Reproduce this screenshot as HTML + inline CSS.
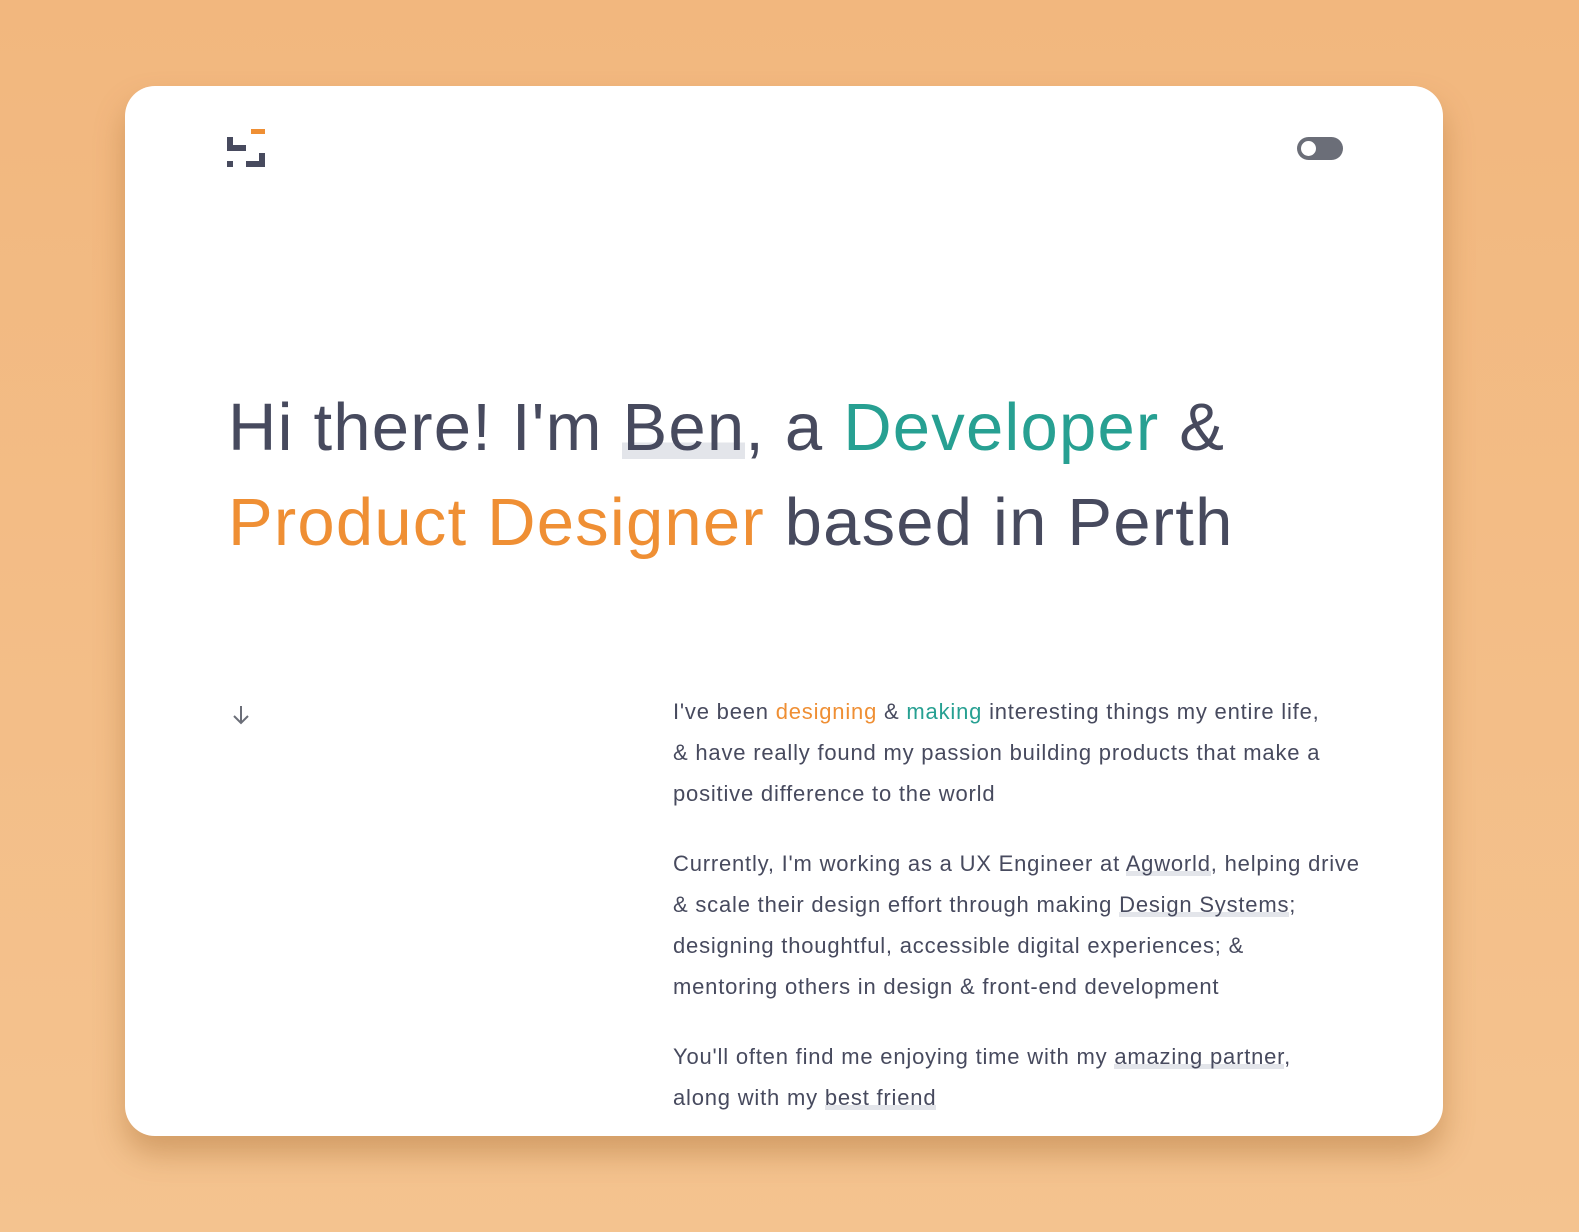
<!DOCTYPE html>
<html><head><meta charset="utf-8"><style>
html,body{margin:0;padding:0}
body{width:1579px;height:1232px;background:linear-gradient(180deg,#f2b77e 0%,#f4c38f 100%);font-family:"Liberation Sans",sans-serif;position:relative;overflow:hidden}
.card{position:absolute;left:125px;top:86px;width:1318px;height:1050px;background:#fff;border-radius:30px;box-shadow:0 18px 30px rgba(150,90,30,.35)}
.logo{position:absolute;left:102px;top:42px}
.tog{position:absolute;left:1172px;top:51px;width:46px;height:23px;border-radius:12px;background:#6b6e78}
.tog:after{content:"";position:absolute;left:4px;top:4px;width:15px;height:15px;border-radius:50%;background:#fff}
h1{position:absolute;left:103px;top:294px;margin:0;font-weight:400;font-size:67px;line-height:95px;color:#474a5e;white-space:nowrap;letter-spacing:1.2px}
.t{color:#27a092}.o{color:#ef8f34}
.ben{background:linear-gradient(transparent 70%,#e3e5ea 70%,#e3e5ea 92%,transparent 92%)}
.arrow{position:absolute;left:106px;top:618px}
.body{position:absolute;left:548px;top:605px;font-size:22px;line-height:41px;color:#474a5e;white-space:nowrap;letter-spacing:0.8px}
.body p{margin:0 0 29px}
.u{background:linear-gradient(transparent 80%,#e3e5ea 80%)}
</style></head><body>
<div class="card">
<svg class="logo" width="40" height="40" viewBox="0 0 40 40">
<rect x="24" y="1" width="14" height="5" fill="#ef8f34"/>
<path d="M0 9h6v8h13v6H0z" fill="#474a5e"/>
<rect x="0" y="33" width="6" height="6" fill="#474a5e"/>
<path d="M32 25h6v14H19v-6h13z" fill="#474a5e"/>
</svg>
<div class="tog"></div>
<h1>Hi there! I'm <span class="ben">Ben</span>, a <span class="t">Developer</span> &amp;<br><span class="o">Product Designer</span> based in Perth</h1>
<svg class="arrow" width="20" height="22" viewBox="0 0 20 22"><path d="M10 2v17M3 12l7 7 7-7" fill="none" stroke="#6b6e78" stroke-width="2"/></svg>
<div class="body">
<p>I've been <span class="o">designing</span> &amp; <span class="t">making</span> interesting things my entire life,<br>&amp; have really found my passion building products that make a<br>positive difference to the world</p>
<p>Currently, I'm working as a UX Engineer at <span class="u">Agworld</span>, helping drive<br>&amp; scale their design effort through making <span class="u">Design Systems</span>;<br>designing thoughtful, accessible digital experiences; &amp;<br>mentoring others in design &amp; front-end development</p>
<p>You'll often find me enjoying time with my <span class="u">amazing partner</span>,<br>along with my <span class="u">best friend</span></p>
</div>
</div>
</body></html>
